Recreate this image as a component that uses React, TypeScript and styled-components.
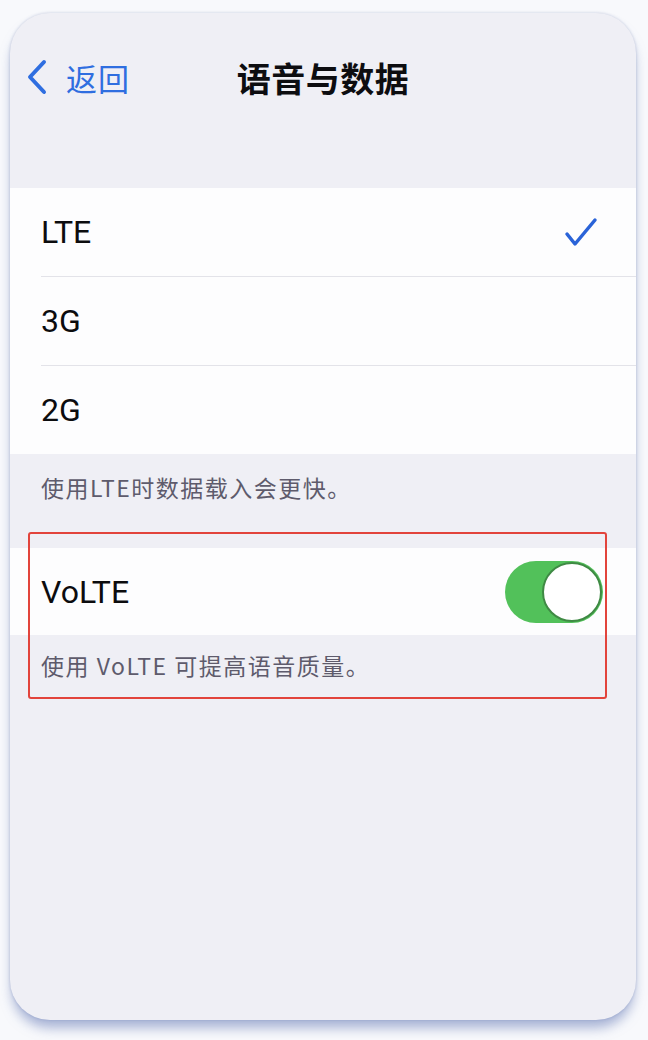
import { FC } from "react"
import styled, { createGlobalStyle } from "styled-components"

const Global = createGlobalStyle`
  html, body {
    margin: 0;
    padding: 0;
    background: #f8f9fc;
  }
  body {
    font-family: Roboto, "Noto Sans CJK SC", sans-serif;
  }
`

const Page = styled.div`
  padding: 13px 12px 20px 10px;
`

const Phone = styled.div`
  height: 1007px;
  background: #efeff5;
  border-radius: 40px;
  box-shadow: 0 10px 12px -2px rgba(115, 133, 188, 0.6), 0 0 3px rgba(130, 145, 185, 0.45);
  overflow: hidden;
`

const NavBar = styled.div`
  position: relative;
  height: 48px;
  margin-top: 40px;
  display: flex;
  align-items: center;
  justify-content: center;
`

const Back = styled.div`
  position: absolute;
  left: 16px;
  top: 0;
  height: 100%;
  display: flex;
  align-items: center;
  gap: 18px;
  color: #2f6ee0;
  font: 400 31px "Noto Sans CJK SC", sans-serif;
  letter-spacing: 1px;
`

const Title = styled.div`
  font: 700 34px "Noto Sans CJK SC", sans-serif;
  color: #0d0d10;
  letter-spacing: 0.5px;
`

const Group = styled.div<{ $top: number }>`
  margin-top: ${p => p.$top}px;
  background: #fdfdfe;
`

const Row = styled.div<{ $height: number }>`
  height: ${p => p.$height}px;
  margin-left: 31px;
  padding-right: 38px;
  display: flex;
  align-items: center;
  justify-content: space-between;
  &:not(:last-child) {
    border-bottom: 1px solid #e3e3e9;
  }
`

const Label = styled.span`
  font: 400 32px Roboto, sans-serif;
  color: #0c0c0e;
`

const Footer = styled.div<{ $pad: number }>`
  padding: ${p => p.$pad}px 0 0 31px;
  font: 400 23px "Noto Sans CJK SC", sans-serif;
  line-height: 30px;
  letter-spacing: 1.5px;
  color: #5e5b6c;
`

const Highlighted = styled.div`
  position: relative;
  &::after {
    content: '';
    position: absolute;
    top: -16px;
    left: 18px;
    right: 29px;
    bottom: -19px;
    border: 2.5px solid #e2443c;
    border-radius: 3px;
    pointer-events: none;
  }
`

const Toggle = styled.div<{ $on: boolean }>`
  width: 98px;
  height: 62px;
  border-radius: 31px;
  background: ${p => (p.$on ? "#52c15a" : "#e4e4ea")};
  display: flex;
  justify-content: ${p => (p.$on ? "flex-end" : "flex-start")};
  margin-right: -5px;
`

const Knob = styled.div`
  width: 56px;
  height: 56px;
  margin: 1px;
  border-radius: 50%;
  background: #fff;
  border: 2px solid #3f8a44;
`

const Chevron: FC = () => (
  <svg width="22" height="36" viewBox="0 0 22 36">
    <path d="M18 3 L4 18 L18 33" fill="none" stroke="#2f6ee0" strokeWidth="4" strokeLinecap="round" strokeLinejoin="round" />
  </svg>
)

const Check: FC = () => (
  <svg width="34" height="30" viewBox="0 0 34 30">
    <path d="M3 17 L11 27 L31 3" fill="none" stroke="#2a63d8" strokeWidth="3.5" strokeLinecap="round" strokeLinejoin="round" />
  </svg>
)

const networks = ["LTE", "3G", "2G"]

const App: FC = () => {
  const selected = "LTE"
  return (
    <>
      <Global />
      <Page>
        <Phone>
          <NavBar>
            <Back>
              <Chevron />
              <span>返回</span>
            </Back>
            <Title>语音与数据</Title>
          </NavBar>
          <Group $top={87}>
            {networks.map(n => (
              <Row key={n} $height={88}>
                <Label>{n}</Label>
                {n === selected && <Check />}
              </Row>
            ))}
          </Group>
          <Footer $pad={18}>使用LTE时数据载入会更快。</Footer>
          <Highlighted style={{ marginTop: 46 }}>
            <Group $top={0}>
              <Row $height={87}>
                <Label>VoLTE</Label>
                <Toggle $on={true}>
                  <Knob />
                </Toggle>
              </Row>
            </Group>
            <Footer $pad={15}>使用 VoLTE 可提高语音质量。</Footer>
          </Highlighted>
        </Phone>
      </Page>
    </>
  )
}

export default App
